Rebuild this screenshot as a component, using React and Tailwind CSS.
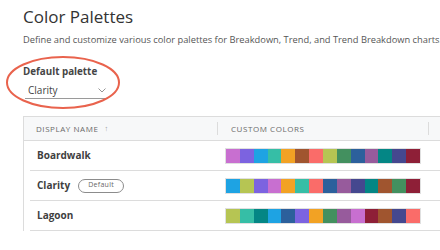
import React from "react";

const C = {
  orchid: "#c86fd0",
  purple: "#7c63e0",
  blue: "#1ea3e3",
  teal: "#36bea6",
  orange: "#f2a224",
  brown: "#a0552f",
  salmon: "#fa6c69",
  olive: "#b6c553",
  green: "#43905f",
  navy: "#2c609c",
  plum: "#975b9c",
  tealdk: "#048685",
  indigo: "#45488f",
  maroon: "#8e1f37",
};

const rows = [
  {
    name: "Boardwalk",
    colors: ["orchid", "purple", "blue", "teal", "orange", "brown", "salmon", "olive", "green", "navy", "plum", "tealdk", "indigo", "maroon"],
  },
  {
    name: "Clarity",
    def: true,
    colors: ["blue", "olive", "purple", "orchid", "orange", "teal", "salmon", "navy", "plum", "indigo", "tealdk", "brown", "green", "maroon"],
  },
  {
    name: "Lagoon",
    colors: ["olive", "teal", "tealdk", "blue", "navy", "purple", "orange", "green", "plum", "orchid", "maroon", "brown", "indigo", "salmon"],
  },
];

export default function App() {
  return (
    <div
      className="relative w-[440px] h-[250px] overflow-hidden bg-white pl-[23px] pt-[5px]"
      style={{ fontFamily: '"Open Sans", "Liberation Sans", sans-serif' }}
    >
      <h1 className="text-[17px] leading-[23px] text-[#333] font-normal">Color Palettes</h1>
      <p className="mt-[6px] text-[9.3px] leading-[12px] text-[#565656] whitespace-nowrap">
        Define and customize various color palettes for Breakdown, Trend, and Trend Breakdown charts.
      </p>
      <div className="mt-[20px] text-[9.8px] leading-[12px] font-bold text-[#454545]">Default palette</div>
      <div className="mt-[4px] ml-[2px] w-[83px] h-[17px] border-b border-[#9a9a9a] flex items-center justify-between pl-[3px] pr-[2px]">
        <span className="text-[10px] leading-[14px] text-[#444]">Clarity</span>
        <svg width="8" height="5" viewBox="0 0 8 5" className="mt-[1px]">
          <path d="M0.5 0.5 L4 4 L7.5 0.5" fill="none" stroke="#8a8a8a" strokeWidth="0.9" />
        </svg>
      </div>

      <div className="mt-[17px] w-[440px] border-l border-t border-[#dcdcdc]">
        <div className="flex h-[24px] items-center bg-[#f7f8f9] border-b border-[#dcdcdc] text-[8px] tracking-[0.07em] text-[#6a6a6a]">
          <div className="w-[193px] pl-[12px] flex items-center gap-[6px]">
            <span>DISPLAY NAME</span>
            <span className="text-[7.5px] text-[#999]">↑</span>
          </div>
          <div className="w-px h-[13px] bg-[#dcdcdc]" />
          <div className="w-[210px] pl-[13px]">CUSTOM COLORS</div>
          <div className="w-px h-[13px] bg-[#dcdcdc]" />
        </div>
        {rows.map((r) => (
          <div key={r.name} className="ml-[6px] flex h-[30px] items-center border-b border-[#dcdcdc]">
            <div className="w-[196px] pl-[7px] flex items-center gap-[8px]">
              <span className="text-[10px] font-bold text-[#3f3f3f]">{r.name}</span>
              {r.def && (
                <span className="h-[14px] w-[46px] rounded-full border border-[#8c8c8c] text-[7px] text-[#666] flex items-center justify-center tracking-[0.04em]">
                  Default
                </span>
              )}
            </div>
            <div className="flex w-[194px] h-[14px] outline outline-1 outline-[rgba(0,0,0,0.12)]">
              {r.colors.map((c, i) => (
                <div key={i} className="flex-1 h-full" style={{ background: C[c] }} />
              ))}
            </div>
          </div>
        ))}
      </div>

      <svg className="absolute left-0 top-0 pointer-events-none" width="440" height="250">
        <ellipse cx="63" cy="82.5" rx="56" ry="25.5" fill="none" stroke="#e9634d" strokeWidth="2" />
      </svg>
    </div>
  );
}
